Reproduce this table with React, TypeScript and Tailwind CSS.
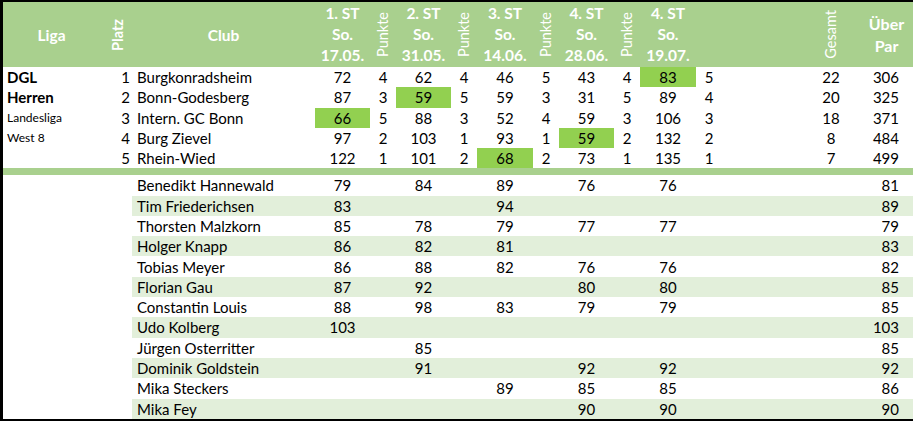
import { Fragment } from 'react'

const teams = [
  { liga: 'DGL', ligaBold: true, platz: 1, club: 'Burgkonradsheim', st: [72, 62, 46, 43, 83], p: [4, 4, 5, 4, 5], hi: 4, gesamt: 22, par: 306 },
  { liga: 'Herren', ligaBold: true, platz: 2, club: 'Bonn-Godesberg', st: [87, 59, 59, 31, 89], p: [3, 5, 3, 5, 4], hi: 1, gesamt: 20, par: 325 },
  { liga: 'Landesliga', ligaBold: false, platz: 3, club: 'Intern. GC Bonn', st: [66, 88, 52, 59, 106], p: [5, 3, 4, 3, 3], hi: 0, gesamt: 18, par: 371 },
  { liga: 'West 8', ligaBold: false, platz: 4, club: 'Burg Zievel', st: [97, 103, 93, 59, 132], p: [2, 1, 1, 2, 2], hi: 3, gesamt: 8, par: 484 },
  { liga: '', ligaBold: false, platz: 5, club: 'Rhein-Wied', st: [122, 101, 68, 73, 135], p: [1, 2, 2, 1, 1], hi: 2, gesamt: 7, par: 499 },
]

const players: { name: string; st: (number | null)[]; par: number }[] = [
  { name: 'Benedikt Hannewald', st: [79, 84, 89, 76, 76], par: 81 },
  { name: 'Tim Friederichsen', st: [83, null, 94, null, null], par: 89 },
  { name: 'Thorsten Malzkorn', st: [85, 78, 79, 77, 77], par: 79 },
  { name: 'Holger Knapp', st: [86, 82, 81, null, null], par: 83 },
  { name: 'Tobias Meyer', st: [86, 88, 82, 76, 76], par: 82 },
  { name: 'Florian Gau', st: [87, 92, null, 80, 80], par: 85 },
  { name: 'Constantin Louis', st: [88, 98, 83, 79, 79], par: 85 },
  { name: 'Udo Kolberg', st: [103, null, null, null, null], par: 103 },
  { name: 'Jürgen Osterritter', st: [null, 85, null, null, null], par: 85 },
  { name: 'Dominik Goldstein', st: [null, 91, null, 92, 92], par: 92 },
  { name: 'Mika Steckers', st: [null, null, 89, 85, 85], par: 86 },
  { name: 'Mika Fey', st: [null, null, null, 90, 90], par: 90 },
]

const rounds = [
  ['1. ST', 'So.', '17.05.'],
  ['2. ST', 'So.', '31.05.'],
  ['3. ST', 'So.', '14.06.'],
  ['4. ST', 'So.', '28.06.'],
  ['4. ST', 'So.', '19.07.'],
]

const stWidths = ['w-[55px]', 'w-[55px]', 'w-[56px]', 'w-[55px]', 'w-[56px]']

function Vertical({ text, bold = false }: { text: string; bold?: boolean }) {
  return (
    <div className="flex h-full items-center justify-center">
      <span className={`[writing-mode:vertical-rl] rotate-180 leading-none ${bold ? 'font-bold' : 'font-normal'}`}>{text}</span>
    </div>
  )
}

export default function App() {
  return (
    <div className="w-[914px] h-[421px] bg-white font-['Lato',sans-serif] text-[15px] leading-[18px] text-black overflow-hidden">
      <div className="w-[913px] h-[421px] overflow-hidden border-l-[3px] border-t-2 border-b-2 border-black">
        <table className="w-full table-fixed border-collapse">
          <colgroup>
            <col className="w-[97px]" />
            <col className="w-[32px]" />
            <col className="w-[183px]" />
            {stWidths.map((w, i) => (
              <Fragment key={i}>
                <col className={w} />
                <col className="w-[26px]" />
              </Fragment>
            ))}
            <col className="w-[86px]" />
            <col className="w-[46px]" />
            <col className="w-[59px]" />
          </colgroup>
          <thead>
            <tr className="h-[65px] bg-[#a9d08e] text-white text-[15.5px]">
              <th className="p-0 font-bold">Liga</th>
              <th className="p-0 pl-[4px] text-[14.5px]"><Vertical text="Platz" bold /></th>
              <th className="p-0 font-bold">Club</th>
              {rounds.map((r, i) => (
                <Fragment key={i}>
                  <th className="p-0 font-bold leading-[21px] align-bottom pb-[1px]">
                    {r.map((l) => <div key={l}>{l}</div>)}
                  </th>
                  <th className="p-0 text-[14.5px]">{i < 4 && <Vertical text="Punkte" />}</th>
                </Fragment>
              ))}
              <th className="p-0"></th>
              <th className="p-0 text-[14.5px]"><Vertical text="Gesamt" /></th>
              <th className="p-0 pl-[6px] font-bold leading-[22px] text-[16px]">
                <div>Über</div>
                <div>Par</div>
              </th>
            </tr>
          </thead>
          <tbody>
            {teams.map((t) => (
              <tr key={t.club} className="h-[20.25px]">
                <td className={`p-0 pl-[4px] whitespace-nowrap ${t.ligaBold ? 'font-bold' : 'text-[12px]'}`}>{t.liga}</td>
                <td className="p-0 pr-[2px] text-right">{t.platz}</td>
                <td className="p-0 pl-[5px] whitespace-nowrap">{t.club}</td>
                {t.st.map((s, i) => (
                  <Fragment key={i}>
                    <td className={`p-0 text-center ${t.hi === i ? 'bg-[#92d050]' : ''}`}>{s}</td>
                    <td className="p-0 text-center">{t.p[i]}</td>
                  </Fragment>
                ))}
                <td className="p-0"></td>
                <td className="p-0 text-center">{t.gesamt}</td>
                <td className="p-0 pr-[14px] text-right">{t.par}</td>
              </tr>
            ))}
            <tr className="h-[7px] bg-[#a9d08e]">
              <td colSpan={16} className="p-0"></td>
            </tr>
            {players.map((pl, idx) => {
              const band = idx % 2 === 1 ? 'bg-[#e2efda]' : ''
              return (
                <tr key={pl.name} className="h-[20.3px]">
                  <td className="p-0"></td>
                  <td className="p-0"></td>
                  <td className={`p-0 pl-[5px] whitespace-nowrap ${band}`}>{pl.name}</td>
                  {pl.st.map((s, i) => (
                    <Fragment key={i}>
                      <td className={`p-0 text-center ${band}`}>{s ?? ''}</td>
                      <td className={`p-0 ${band}`}></td>
                    </Fragment>
                  ))}
                  <td className={`p-0 ${band}`}></td>
                  <td className={`p-0 ${band}`}></td>
                  <td className={`p-0 pr-[14px] text-right ${band}`}>{pl.par}</td>
                </tr>
              )
            })}
          </tbody>
        </table>
      </div>
    </div>
  )
}
